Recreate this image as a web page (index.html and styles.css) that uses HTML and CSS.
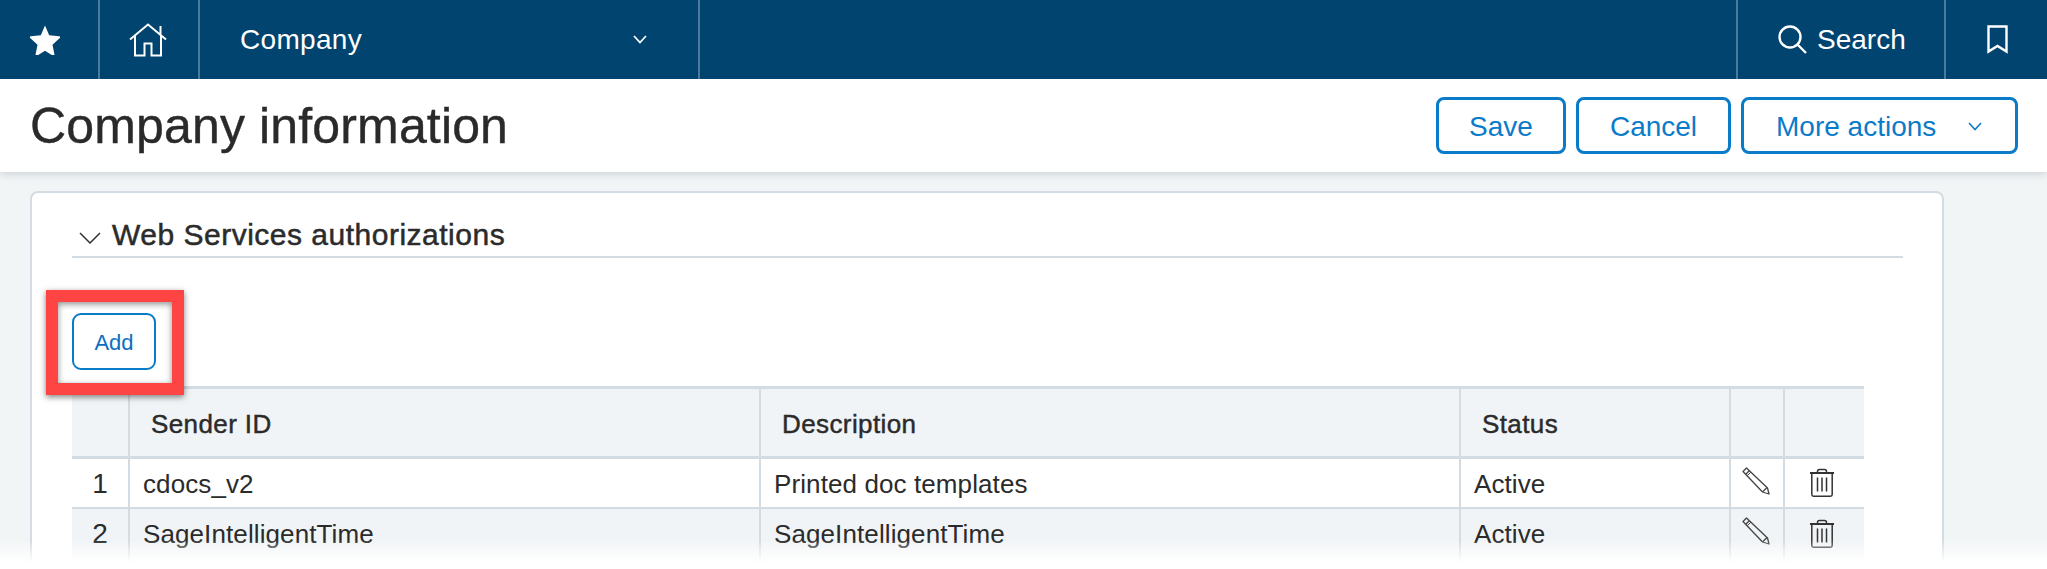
FILE: index.html
```html
<!DOCTYPE html>
<html lang="en">
<head>
<meta charset="utf-8">
<title>Company information</title>
<link rel="stylesheet" href="styles.css">
</head>
<body>
<nav class="topbar">
  <div class="nav-cell cell-star">
    <svg class="ico-star" viewBox="0 0 32 30"><path d="M16 .5l4.200 9.800 10 1c.9.1 1.200 1.100.6 1.700l-7.300 6.800 2 9.900c.2.900-.7 1.500-1.500 1.100L16 25.800l-8 5c-.8.400-1.700-.2-1.500-1.100l2-9.900L1.200 13c-.6-.6-.3-1.600.6-1.700l10-1z" fill="#fff"/></svg>
  </div>
  <div class="nav-cell cell-home">
    <svg class="ico-home" viewBox="0 0 38 34" fill="none" stroke="#fff" stroke-width="2"><path d="M1 16.500L19 1.500l18 15M31.500 3v8.500M6 13v19.500h9.500V20.500h7v12H32V12"/></svg>
  </div>
  <div class="nav-cell cell-menu">
    <span class="nav-text">Company</span>
    <svg class="ico-chev" viewBox="0 0 14 9" fill="none" stroke="#fff" stroke-width="1.800"><path d="M1 1l6 6.500L13 1"/></svg>
  </div>
  <div class="nav-spacer"></div>
  <div class="nav-cell cell-search">
    <svg class="ico-search" viewBox="0 0 29 29" fill="none" stroke="#fff" stroke-width="2.400"><circle cx="12" cy="12" r="10.500"/><path d="M19.500 19.500l8.500 8.500"/></svg>
    <span class="nav-text">Search</span>
  </div>
  <div class="nav-cell cell-mark">
    <svg class="ico-mark" viewBox="0 0 21 29" fill="none" stroke="#fff" stroke-width="2.400"><path d="M1.500 1.500h18v25l-9-5.500-9 5.500z"/></svg>
  </div>
</nav>

<header class="page-head">
  <h1 class="page-title">Company information</h1>
  <div class="actions">
    <button class="btn btn-save">Save</button>
    <button class="btn btn-cancel">Cancel</button>
    <button class="btn btn-more"><span>More actions</span>
      <svg class="ico-chev-blue" viewBox="0 0 14 9" fill="none" stroke="#0a7bc9" stroke-width="1.600"><path d="M1 1l6 6.500L13 1"/></svg>
    </button>
  </div>
</header>

<main class="content">
  <section class="card">
    <div class="section-head">
      <svg class="ico-section" viewBox="0 0 22 12" fill="none" stroke="#333" stroke-width="1.500"><path d="M1 1l10 10L21 1"/></svg>
      <h2 class="section-title">Web Services authorizations</h2>
    </div>
    <div class="toolbar">
      <button class="btn-add">Add</button>
      <div class="callout"></div>
    </div>
    <table class="grid">
      <colgroup>
        <col class="c-num"><col class="c-id"><col class="c-desc"><col class="c-status"><col class="c-edit"><col class="c-del">
      </colgroup>
      <thead>
        <tr><th></th><th>Sender ID</th><th>Description</th><th>Status</th><th></th><th></th></tr>
      </thead>
      <tbody>
        <tr>
          <td class="num">1</td><td>cdocs_v2</td><td>Printed doc templates</td><td>Active</td>
          <td class="act"><svg class="ico-pencil" viewBox="0 0 28 28" fill="none" stroke="#444" stroke-width="1.300"><path d="M1 4.500L4.500 1l21 20 1.500 6-6.500-2zM3.500 7.500l4-4M21 24.500l3.500-3.500" stroke-linejoin="round"/><path d="M5 9l4-4" stroke-width="1"/></svg></td>
          <td class="act"><svg class="ico-trash" viewBox="0 0 26 29" fill="none" stroke="#333" stroke-width="1.500"><path d="M1 5h24" stroke-width="2"/><path d="M8.500 5V3.500q0-2 2-2h5q2 0 2 2V5M2.800 5v21.500q0 1.700 1.700 1.700h17q1.700 0 1.700-1.700V5M8.500 9.500v14M13 9.500v14M17.500 9.500v14"/></svg></td>
        </tr>
        <tr class="alt">
          <td class="num">2</td><td>SageIntelligentTime</td><td>SageIntelligentTime</td><td>Active</td>
          <td class="act"><svg class="ico-pencil" viewBox="0 0 28 28" fill="none" stroke="#444" stroke-width="1.300"><path d="M1 4.500L4.500 1l21 20 1.500 6-6.500-2zM3.500 7.500l4-4M21 24.500l3.500-3.500" stroke-linejoin="round"/><path d="M5 9l4-4" stroke-width="1"/></svg></td>
          <td class="act"><svg class="ico-trash" viewBox="0 0 26 29" fill="none" stroke="#333" stroke-width="1.500"><path d="M1 5h24" stroke-width="2"/><path d="M8.500 5V3.500q0-2 2-2h5q2 0 2 2V5M2.800 5v21.500q0 1.700 1.700 1.700h17q1.700 0 1.700-1.700V5M8.500 9.500v14M13 9.500v14M17.500 9.500v14"/></svg></td>
        </tr>
      </tbody>
    </table>
  </section>
</main>
<div class="fade"></div>
</body>
</html>
```

FILE: styles.css
```css
* { box-sizing: border-box; }
html, body { margin: 0; height: 569px; overflow: hidden; }
body {
  position: relative;
  background: #f2f5f6;
  font-family: "Liberation Sans", Arial, sans-serif;
  color: #2b2b2b;
}

/* top bar */
.topbar {
  display: flex;
  height: 79px;
  background: #00446f;
  color: #fff;
}
.nav-cell {
  display: flex;
  align-items: center;
  border-right: 2px solid #4b7a9c;
}
.nav-text { font-size: 28px; }
.cell-star { width: 100px; justify-content: center; padding-right: 8px; }
.cell-home { width: 100px; justify-content: center; padding-right: 2px; }
.cell-menu { width: 500px; padding: 0 51px 0 40px; justify-content: space-between; }
.cell-menu .nav-text { letter-spacing: 0.3px; }
.nav-spacer { flex: 1; }
.cell-search { width: 210px; padding-left: 40px; gap: 10px; border-left: 2px solid #4b7a9c; }
.cell-mark { width: 101px; border-right: 0; padding-left: 41px; }
.ico-star { width: 32px; height: 30px; }
.ico-home { width: 38px; height: 34px; }
.ico-chev { width: 14px; height: 9px; }
.ico-search { width: 29px; height: 29px; }
.ico-mark { width: 21px; height: 29px; }

/* page header */
.page-head {
  display: flex;
  align-items: center;
  justify-content: space-between;
  height: 93px;
  padding: 0 29px 0 30px;
  background: #fff;
  box-shadow: 0 2px 8px rgba(60, 85, 100, 0.22);
  position: relative;
}
.page-title { margin: 0; font-size: 50px; font-weight: 400; color: #2a2a2a; letter-spacing: 0.15px; -webkit-text-stroke: 0.4px #2a2a2a; }
.actions { display: flex; gap: 10px; }
.btn {
  height: 57px;
  border: 3px solid #0a7bc9;
  border-radius: 8px;
  background: #fff;
  color: #0a7bc9;
  font: 400 28px "Liberation Sans", Arial, sans-serif;
  padding: 2px 0 0;
}
.btn-save { width: 130px; }
.btn-cancel { width: 155px; }
.btn-more {
  width: 277px;
  display: flex;
  align-items: center;
  justify-content: space-between;
  padding: 2px 33px 0 32px;
}
.ico-chev-blue { width: 14px; height: 9px; }

/* card */
.content { padding: 19px 103px 0 30px; }
.card {
  height: 378px;
  padding: 0 39px 0 40px;
  background: #fff;
  border: 2px solid #d3dce2;
  border-radius: 8px;
  overflow: hidden;
}
.section-head {
  display: flex;
  align-items: center;
  gap: 11px;
  height: 65px;
  padding: 20px 0 0 7px;
  border-bottom: 2px solid #d3dce2;
}
.ico-section { width: 22px; height: 12px; margin-top: 6px; }
.section-title { margin: 0; font-size: 30px; font-weight: 400; -webkit-text-stroke: 0.5px #2b2b2b; color: #2b2b2b; letter-spacing: 0.5px; }

.toolbar { position: relative; height: 128px; padding-top: 55px; }
.btn-add {
  display: block;
  width: 84px;
  height: 57px;
  padding: 2px 0 0;
  border: 2px solid #0a7bc9;
  border-radius: 9px;
  background: #fff;
  color: #0a6fc0;
  font: 400 22px "Liberation Sans", Arial, sans-serif;
}
.callout {
  position: absolute;
  left: -26px;
  top: 32px;
  width: 138px;
  height: 105px;
  border: 12px solid #ff4444;
  box-shadow: 0 2px 6px rgba(0, 0, 0, 0.5), inset 0 2px 6px rgba(0, 0, 0, 0.45);
  z-index: 2;
}

/* table */
.grid {
  width: 1792px;
  table-layout: fixed;
  border-collapse: collapse;
  font-size: 26px;
  line-height: 30px;
}
.c-num { width: 57px; }
.c-id { width: 631px; }
.c-desc { width: 700px; }
.c-status { width: 270px; }
.c-edit { width: 54px; }
.c-del { width: 80px; }
.grid thead tr { height: 70px; background: #f1f4f6; border-top: 3px solid #d3dce2; border-bottom: 3px solid #d3dce2; }
.grid tbody tr { height: 50px; background: #fff; border-bottom: 2px solid #d3dce2; }
.grid tbody tr.alt { height: 62px; background: #f1f4f6; border-bottom: 0; }
.grid th, .grid td { border-left: 2px solid #d3dce2; padding: 0; text-align: left; }
.grid th:first-child, .grid td:first-child { border-left: 0; }
.grid th { padding: 2px 0 0 21px; font-weight: 400; -webkit-text-stroke: 0.45px #2b2b2b; letter-spacing: 0.4px; }
.grid td { padding: 2px 0 0 13px; letter-spacing: 0.1px; }
.grid .alt td { vertical-align: top; padding-top: 10px; }
.grid td.num { padding-left: 0; text-align: center; font-size: 28px; }
.grid td.act { padding: 0; }
.grid .alt td.act { padding-top: 10px; }
.act svg { display: block; }
.ico-pencil { width: 28px; height: 28px; margin: -4px 0 0 11px; }
.alt .ico-pencil { margin-top: -2px; }
.ico-trash { width: 26px; height: 29px; margin: 0 0 0 24px; }

/* bottom fade */
.fade {
  position: absolute;
  left: 0;
  right: 0;
  bottom: 0;
  height: 29px;
  background: linear-gradient(to bottom, rgba(255,255,255,0), #fff 78%);
  z-index: 3;
}
```
